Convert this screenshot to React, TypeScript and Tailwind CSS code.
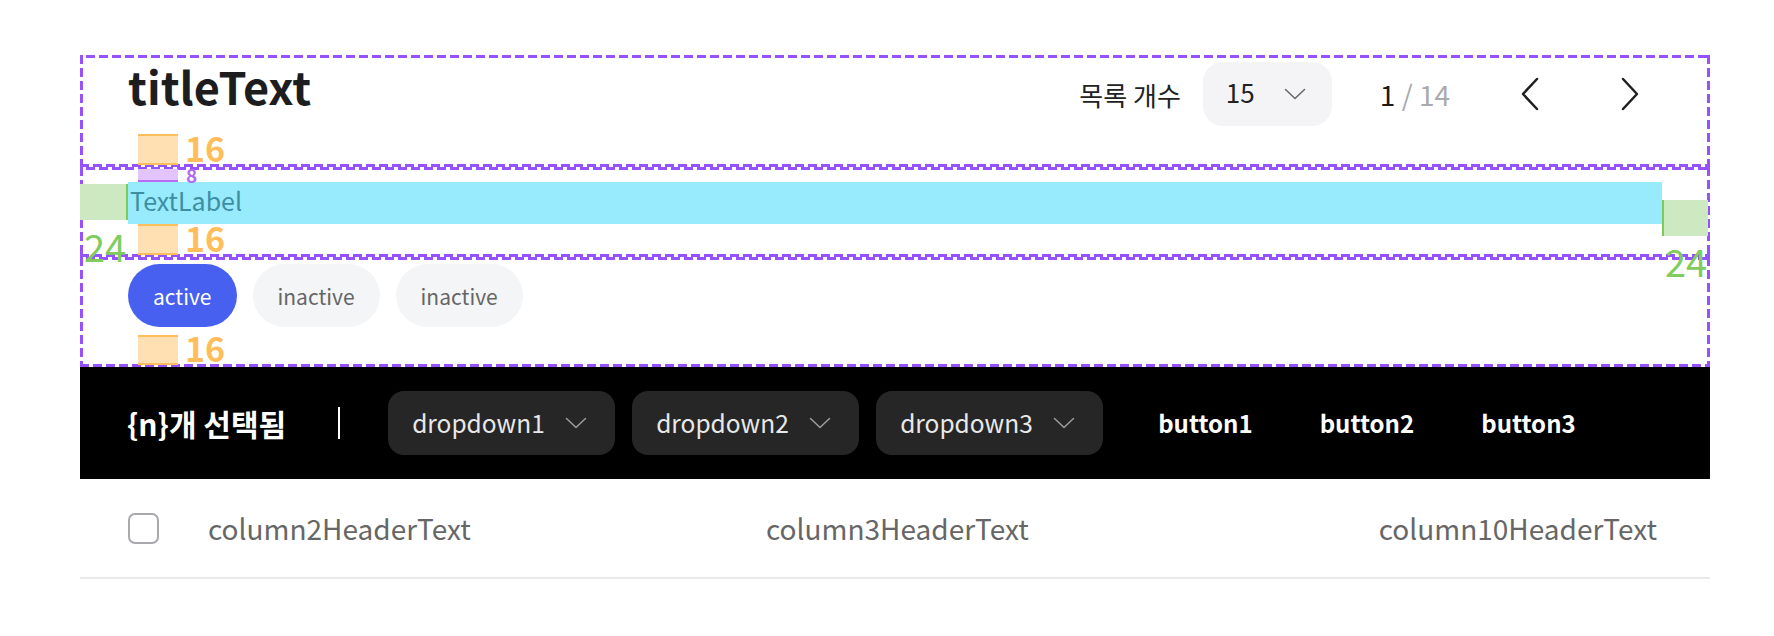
import React from 'react';

// dashed spec outline drawn with background stripes (9px dash / 4px gap)
const dashed =
  'bg-no-repeat bg-[repeating-linear-gradient(90deg,#9652ff_0_9px,transparent_9px_13px),repeating-linear-gradient(90deg,#9652ff_0_9px,transparent_9px_13px),repeating-linear-gradient(180deg,#9652ff_0_9px,transparent_9px_13px),repeating-linear-gradient(180deg,#9652ff_0_9px,transparent_9px_13px)] bg-[length:100%_3px,100%_3px,3px_100%,3px_100%] bg-[position:6px_0,0_100%,0_0,100%_0]';

function Gap16({ h = 'h-[31px]' }: { h?: string }) {
  return (
    <div className={`flex items-center ${h}`}>
      <div className="ml-[10px] h-full w-[40px] border-y-2 border-[#ffbe5c] bg-[#ffe0b2]" />
      <span className="ml-[7px] pb-[5px] text-[34px] font-bold leading-[31px] text-[#ffbd5c]">16</span>
    </div>
  );
}

function ChevronDown({ color }: { color: string }) {
  return (
    <svg width="22" height="12" viewBox="0 0 22 12" fill="none">
      <polyline points="1.5,1.5 11,10.5 20.5,1.5" stroke={color} strokeWidth="1.5" strokeLinecap="round" strokeLinejoin="round" />
    </svg>
  );
}

function Pager({ dir }: { dir: 'left' | 'right' }) {
  return (
    <button className="flex h-[64px] w-[64px] items-center justify-center">
      <svg width="20" height="34" viewBox="0 0 20 34" fill="none">
        <polyline
          points={dir === 'left' ? '17,2 3,17 17,32' : '3,2 17,17 3,32'}
          stroke="#1f1f1f"
          strokeWidth="2.5"
          strokeLinecap="round"
          strokeLinejoin="round"
        />
      </svg>
    </button>
  );
}

export default function App() {
  return (
    <div className="min-h-[636px] bg-white pl-[80px] pt-[55px] font-['Noto_Sans_CJK_KR','Noto_Sans',sans-serif]">
      <div className="relative w-[1630px]">
        {/* Header */}
        <section className={`${dashed} px-[48px] pb-[2px] pt-[7px]`}>
          <div className="flex h-[64px] items-center">
            <h1 className="self-start text-[45px] font-bold leading-[48px] text-[#1d1d1f]">titleText</h1>
            <div className="ml-auto flex items-center">
              <span className="mr-[22px] text-[26px] text-[#222]">목록 개수</span>
              <div className="mr-[48px] flex h-[64px] w-[129px] items-center justify-between rounded-[20px] bg-[#f4f4f6] pl-[23px] pr-[26px]">
                <span className="pb-[5px] text-[26px] text-[#222]">15</span>
                <ChevronDown color="#666" />
              </div>
              <span className="mr-[48px] text-[28px] text-[#1a1a1a]">
                1<span className="text-[#aaaaae]"> / 14</span>
              </span>
              <Pager dir="left" />
              <div className="w-[36px]" />
              <Pager dir="right" />
            </div>
          </div>
          <div className="mt-[8px]">
            <Gap16 />
          </div>
        </section>

        {/* Label */}
        <section className={`${dashed} px-[48px] py-[2px]`}>
          <div className="flex h-[13px] items-center">
            <div className="ml-[10px] h-full w-[40px] border-b-2 border-[#b86cf5] bg-[#e3c4ff]" />
            <span className="ml-[8px] pb-[3px] text-[19px] font-bold leading-[13px] text-[#b46af3]">8</span>
          </div>
          <div className="h-[42px] bg-[#98eafd] pl-[2px] text-[25px] leading-[36px] text-[#3e8ea2]">TextLabel</div>
          <Gap16 />
        </section>

        {/* Chips */}
        <section className={`${dashed} px-[48px] pb-[2px] pt-[7px]`}>
          <div className="flex h-[63px] gap-[16px]">
            <button className="h-full rounded-full bg-[#4760f0] px-[25px] text-[21px] leading-[58px] text-white">active</button>
            <button className="h-full rounded-full bg-[#f4f5f7] px-[25px] text-[21px] leading-[58px] text-[#666]">inactive</button>
            <button className="h-full rounded-full bg-[#f4f5f7] px-[25px] text-[21px] leading-[58px] text-[#666]">inactive</button>
          </div>
          <div className="mt-[8px]">
            <Gap16 h="h-[30px]" />
          </div>
        </section>

        {/* Selection bar */}
        <div className="flex h-[112px] items-center bg-black pl-[47px]">
          <span className="text-[30px] font-bold text-white">{'{n}'}개 선택됨</span>
          <div className="ml-[52px] h-[32px] w-[2px] bg-white" />
          <div className="ml-[48px] flex gap-[17px]">
            {['dropdown1', 'dropdown2', 'dropdown3'].map((d) => (
              <div key={d} className="flex h-[64px] w-[227px] shrink-0 items-center justify-between rounded-[16px] bg-[#262626] pl-[24px] pr-[28px]">
                <span className="text-[24.5px] text-[#e8e8e8]">{d}</span>
                <ChevronDown color="#9c9c9c" />
              </div>
            ))}
          </div>
          <div className="ml-[55px] flex gap-[67px]">
            {['button1', 'button2', 'button3'].map((b) => (
              <button key={b} className="text-[24px] font-bold text-white">{b}</button>
            ))}
          </div>
        </div>

        {/* Table header */}
        <div className="flex h-[100px] items-center border-b-2 border-[#e8e8ee] pl-[48px] pr-[53px] text-[28px] text-[#666]">
          <div className="h-[31px] w-[31px] rounded-[7px] border-2 border-[#a9a9ad]" />
          <span className="ml-[49px] w-[558px]">column2HeaderText</span>
          <span className="flex-1">column3HeaderText</span>
          <span>column10HeaderText</span>
        </div>

        {/* Spacing annotations */}
        <div className="absolute left-0 top-[129px] h-[36px] w-[48px] border-r-2 border-[#7ccb59] bg-[#cde9c1]" />
        <div className="absolute left-[1582px] top-[145px] h-[36px] w-[46px] border-l-2 border-[#7ccb59] bg-[#cde9c1]" />
        <span className="absolute left-[4px] top-[172px] text-[38px] leading-[38px] text-[#80cc5e]">24</span>
        <span className="absolute left-[1585px] top-[187px] text-[38px] leading-[38px] text-[#80cc5e]">24</span>
      </div>
    </div>
  );
}
